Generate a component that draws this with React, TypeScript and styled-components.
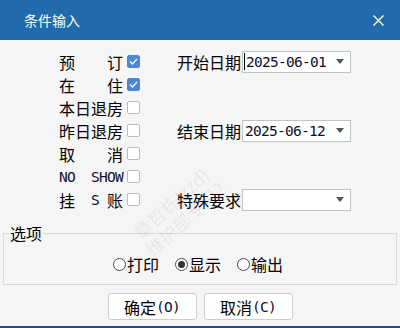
import React from "react";
import styled, { createGlobalStyle } from "styled-components";

const GlobalStyle = createGlobalStyle`
  html, body { margin: 0; padding: 0; background: #f5f5f5; }
  body { font-family: "Noto Sans CJK SC", "Liberation Sans", sans-serif; }
  * { box-sizing: border-box; }
`;

const Window = styled.div`
  position: relative;
  width: 400px;
  height: 328px;
  display: flex;
  flex-direction: column;
  background: #f5f5f5;
  border-bottom: 2px solid #1d4e7d;
  overflow: hidden;
`;

const TitleBar = styled.div`
  height: 40px;
  flex: none;
  background: #216aac;
  color: #fff;
  display: flex;
  align-items: center;
  justify-content: space-between;
  padding: 0 16px 0 24px;
  font-size: 14px;
  line-height: 16px;
`;

const CloseButton = styled.div`
  width: 11px;
  height: 11px;
  display: flex;
  svg { display: block; }
`;

const Body = styled.div`
  flex: 1;
  display: flex;
  flex-direction: column;
  padding-top: 10px;
`;

const FormGrid = styled.div`
  display: grid;
  grid-template-columns: 68px 13px 102px 109px;
  grid-template-rows: repeat(7, 23px);
  padding-left: 59px;
  align-items: center;
  font-size: 16px;
  line-height: 18px;
  color: #000;
`;

const Label = styled.div<{ $right?: boolean }>`
  width: 64px;
  display: flex;
  justify-content: space-between;
  align-items: center;
  white-space: nowrap;
  justify-self: ${(p) => (p.$right ? "end" : "start")};
  margin-right: ${(p) => (p.$right ? "1px" : "0")};
`;

const Ascii = styled.span`
  font-family: "DejaVu Sans Mono", monospace;
  font-size: 14.5px;
  letter-spacing: -0.73px;
  line-height: 18px;
  color: #101030;
`;

const Pair = styled.span`
  display: inline-flex;
  gap: 8px;
  align-items: center;
`;

const Check = styled.span<{ $checked?: boolean }>`
  width: 13px;
  height: 13px;
  border-radius: 2px;
  display: flex;
  align-items: center;
  justify-content: center;
  background: ${(p) => (p.$checked ? "#4a88da" : "#fff")};
  border: 1px solid ${(p) => (p.$checked ? "#4a88da" : "#bcbcbc")};
`;

const Empty = styled.span``;

const Select = styled.div`
  height: 22px;
  width: 109px;
  background: #fff;
  border: 1px solid #c2c2c2;
  display: flex;
  align-items: center;
  padding-left: 2px;
  font-family: "DejaVu Sans Mono", monospace;
  font-size: 14.5px;
  letter-spacing: -0.73px;
  color: #0e0e2a;
`;

const Caret = styled.span`
  width: 1px;
  height: 17px;
  background: #000;
  margin-left: -1px;
  margin-right: 1px;
`;

const Arrow = styled.span`
  margin-left: auto;
  margin-right: 6px;
  width: 0;
  height: 0;
  border-left: 4.5px solid transparent;
  border-right: 4.5px solid transparent;
  border-top: 5px solid #4b5a52;
`;

const Options = styled.fieldset`
  margin: 14px 3px 0 3px;
  padding: 14px 0 11px 0;
  border: 1px solid #dadada;
  min-width: 0;
`;

const Legend = styled.legend`
  margin-left: 5px;
  padding: 0 1px;
  font-size: 16px;
  line-height: 16px;
  color: #000;
`;

const RadioRow = styled.div`
  display: flex;
  justify-content: center;
  gap: 16px;
  height: 18px;
  align-items: center;
  font-size: 16px;
  padding-right: 4px;
`;

const RadioItem = styled.label`
  display: flex;
  align-items: center;
  gap: 1px;
`;

const RadioDot = styled.span<{ $checked?: boolean }>`
  width: 13px;
  height: 13px;
  border-radius: 50%;
  border: 1px solid #4a4a4a;
  background: #fff;
  display: flex;
  align-items: center;
  justify-content: center;
  &::after {
    content: "";
    width: 7px;
    height: 7px;
    border-radius: 50%;
    background: ${(p) => (p.$checked ? "#333" : "transparent")};
  }
`;

const Buttons = styled.div`
  display: flex;
  justify-content: center;
  gap: 7px;
  margin-top: 8px;
`;

const Button = styled.div`
  width: 89px;
  height: 27px;
  border: 1px solid #cdcdcd;
  border-radius: 3px;
  background: #fff;
  display: flex;
  align-items: center;
  justify-content: center;
  font-size: 16px;
  color: #000;
`;

const Watermark = styled.div`
  position: absolute;
  left: 108px;
  top: 190px;
  width: 140px;
  transform: rotate(-42deg);
  pointer-events: none;
  color: rgba(0, 0, 0, 0.07);
  font-size: 18px;
  line-height: 21px;
  text-align: center;
  white-space: nowrap;
`;

const CheckMark = () => (
  <svg width="9" height="7" viewBox="0 0 9 7">
    <path d="M1 3.5 L3.5 6 L8 1" fill="none" stroke="#fff" strokeWidth="1.3" />
  </svg>
);

const Box = ({ checked }: { checked?: boolean }) => (
  <Check $checked={checked}>{checked && <CheckMark />}</Check>
);

export default function App() {
  return (
    <>
      <GlobalStyle />
      <Window>
        <TitleBar>
          <span>条件输入</span>
          <CloseButton>
            <svg width="11" height="11" viewBox="0 0 11 11">
              <path d="M0.5 0.5 L10.5 10.5 M10.5 0.5 L0.5 10.5" stroke="#fff" strokeWidth="1.4" />
            </svg>
          </CloseButton>
        </TitleBar>
        <Body>
          <FormGrid>
            <Label><span>预</span><span>订</span></Label>
            <Box checked />
            <Label $right>开始日期</Label>
            <Select><Caret />2025-06-01<Arrow /></Select>

            <Label><span>在</span><span>住</span></Label>
            <Box checked />
            <Empty />
            <Empty />

            <Label>本日退房</Label>
            <Box />
            <Empty />
            <Empty />

            <Label>昨日退房</Label>
            <Box />
            <Label $right>结束日期</Label>
            <Select>2025-06-12<Arrow /></Select>

            <Label><span>取</span><span>消</span></Label>
            <Box />
            <Empty />
            <Empty />

            <Label><Ascii>NO</Ascii><Ascii>SHOW</Ascii></Label>
            <Box />
            <Empty />
            <Empty />

            <Label><span>挂</span><Pair><Ascii>S</Ascii><span>账</span></Pair></Label>
            <Box />
            <Label $right>特殊要求</Label>
            <Select><Arrow /></Select>
          </FormGrid>

          <Options>
            <Legend>选项</Legend>
            <RadioRow>
              <RadioItem><RadioDot />打印</RadioItem>
              <RadioItem><RadioDot $checked />显示</RadioItem>
              <RadioItem><RadioDot />输出</RadioItem>
            </RadioRow>
          </Options>

          <Buttons>
            <Button>确定<Ascii>(O)</Ascii></Button>
            <Button>取消<Ascii>(C)</Ascii></Button>
          </Buttons>
        </Body>
        <Watermark>
          <div>章哲栋(zzd)</div>
          <div>维护部专用2</div>
        </Watermark>
      </Window>
    </>
  );
}
